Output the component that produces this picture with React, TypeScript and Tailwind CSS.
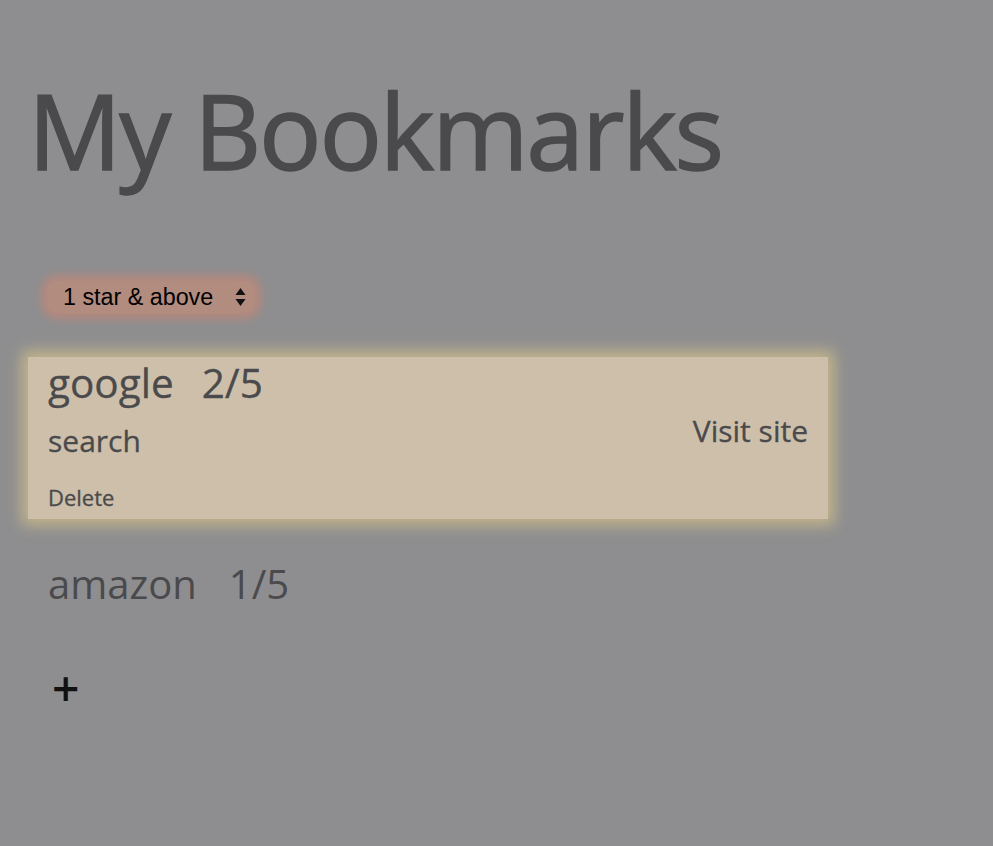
const bookmarks = [
  { name: 'google', rating: 2, tag: 'search', open: true },
  { name: 'amazon', rating: 1, tag: 'shopping', open: false },
];

const font = { fontFamily: '"Open Sans", sans-serif' };

export default function App() {
  return (
    <div
      className="min-h-[846px] w-full bg-[#8e8e90] px-[28px] pt-[68px] text-[#4a4a4c]"
      style={font}
    >
      <h1 className="text-[104px] leading-[124px] tracking-[-2.2px] [-webkit-text-stroke:1.5px_#4a4a4c]">
        My Bookmarks
      </h1>

      <div className="mt-[89px] pl-[19px]">
        <div className="flex h-[32px] w-[208px] items-center justify-between rounded-[10px] bg-[#b38c80] pl-[16px] pr-[9px] shadow-[0_0_10px_6px_rgba(190,135,120,0.8)]">
          <span className="font-['Liberation_Sans',sans-serif] text-[23.3px] text-black">
            1 star &amp; above
          </span>
          <svg width="11" height="20" viewBox="0 0 11 20">
            <path d="M5.5 1 L10.5 8 H0.5 Z" fill="#111" />
            <path d="M5.5 19 L10.5 12 H0.5 Z" fill="#111" />
          </svg>
        </div>
      </div>

      <div className="mt-[44px] flex w-[800px] flex-col">
        {bookmarks.map((b) =>
          b.open ? (
            <div
              key={b.name}
              className="flex h-[162px] items-start justify-between bg-[#cdbfaa] px-[20px] pt-[2px] shadow-[0_0_14px_6px_rgba(215,195,135,0.75)]"
            >
              <div className="flex flex-col [-webkit-text-stroke:0.3px_#4a4a4c]">
                <div className="text-[40.5px] leading-[48px]">
                  {b.name}
                  <span className="ml-[28px]">{b.rating}/5</span>
                </div>
                <div className="mt-[14px] text-[30px] leading-[40px]">{b.tag}</div>
                <button className="mt-[22px] text-left text-[22px] leading-[28px]">Delete</button>
              </div>
              <a className="mt-[52px] text-[30px] leading-[40px] [-webkit-text-stroke:0.3px_#4a4a4c]">
                Visit site
              </a>
            </div>
          ) : (
            <div key={b.name} className="mt-[41px] px-[20px] text-[40px] leading-[48px]">
              {b.name}
              <span className="ml-[32px]">{b.rating}/5</span>
            </div>
          ),
        )}
      </div>

      <button className="mt-[56px] ml-[24px] text-[48px] font-semibold leading-[48px] text-[#111]">+</button>
    </div>
  );
}
